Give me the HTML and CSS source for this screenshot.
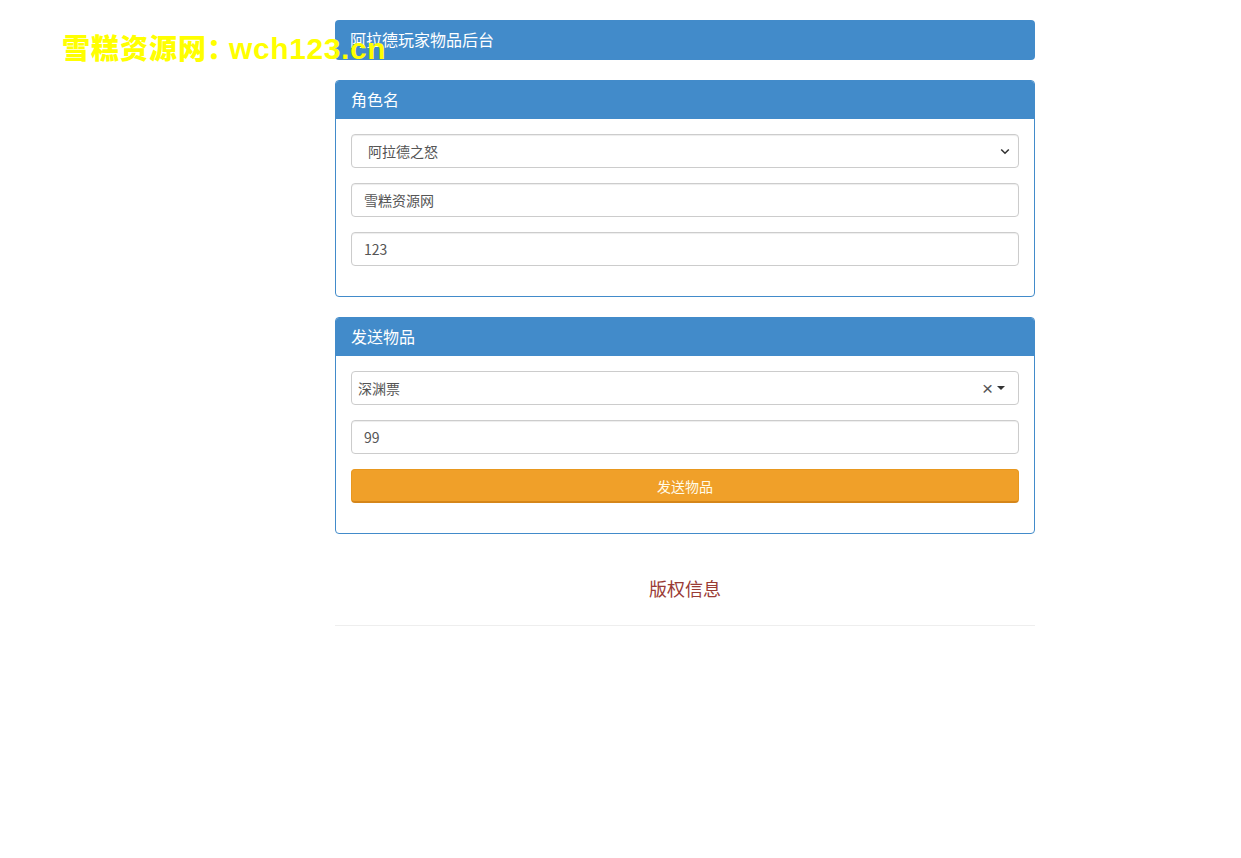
FILE: index.html
```html
<!DOCTYPE html>
<html lang="zh-CN">
<head>
<meta charset="utf-8">
<title>阿拉德玩家物品后台</title>
<link rel="stylesheet" href="styles.css">
</head>
<body>
<div class="watermark">雪糕资源网<span class="wm-colon">：</span><span class="wm-latin">wch123.cn</span></div>
<div class="container">
  <div class="panel panel-top">
    <div class="panel-heading">阿拉德玩家物品后台</div>
  </div>

  <div class="panel">
    <div class="panel-heading">角色名</div>
    <div class="panel-body">
      <div class="form-control select">
        <span class="select-text">阿拉德之怒</span>
        <svg class="chev" width="10" height="7" viewBox="0 0 10 7"><path d="M1.2 1.5 L5 5.2 L8.8 1.5" fill="none" stroke="#333" stroke-width="1.6"/></svg>
      </div>
      <div class="form-control">雪糕资源网</div>
      <div class="form-control">123</div>
    </div>
  </div>

  <div class="panel">
    <div class="panel-heading">发送物品</div>
    <div class="panel-body">
      <div class="form-control select2">
        <span>深渊票</span>
        <span class="s2-actions"><span class="s2-clear">×</span><span class="s2-caret"></span></span>
      </div>
      <div class="form-control">99</div>
      <div class="btn">发送物品</div>
    </div>
  </div>

  <div class="footer">版权信息</div>
  <div class="rule"></div>
</div>
</body>
</html>
```

FILE: styles.css
```css
* { box-sizing: border-box; }
body {
  margin: 0;
  background: #fff;
  font-family: "Noto Sans CJK SC", "Liberation Sans", sans-serif;
  font-size: 14px;
  color: #555;
}
.watermark {
  position: absolute;
  left: 62px;
  top: 29px;
  font-size: 28px;
  font-weight: 900;
  color: #ffff00;
  line-height: 36px;
  letter-spacing: 1px;
  z-index: 5;
  white-space: nowrap;
}
.wm-colon {
  letter-spacing: -6px;
}
.wm-latin {
  font-family: "Liberation Sans", sans-serif;
  font-weight: 700;
  font-size: 30px;
  letter-spacing: 0.6px;
}
.container {
  width: 700px;
  margin: 20px 0 0 335px;
}
.panel {
  border: 1px solid #428bca;
  border-radius: 4px;
  margin-bottom: 20px;
  background: #fff;
}
.panel-top { border: none; }
.panel-heading {
  background: #428bca;
  color: #fff;
  font-size: 16px;
  height: 38px;
  line-height: 37px;
  padding: 0 15px;
  border-radius: 3px 3px 0 0;
}
.panel-top .panel-heading {
  height: 40px;
  line-height: 39px;
  border-radius: 4px;
}
.panel-body {
  padding: 15px;
}
.form-control {
  height: 34px;
  border: 1px solid #ccc;
  border-radius: 4px;
  padding: 0 12px;
  line-height: 32px;
  font-size: 14px;
  color: #555;
  margin-bottom: 15px;
  box-shadow: inset 0 1px 1px rgba(0,0,0,0.075);
  background: #fff;
}
.select {
  display: flex;
  justify-content: space-between;
  align-items: center;
  padding: 0 8px 0 16px;
}
.chev { display: block; }
.select2 {
  display: flex;
  justify-content: space-between;
  align-items: center;
  padding: 0 13px 0 6px;
  box-shadow: none;
}
.s2-actions {
  display: flex;
  align-items: center;
  gap: 4px;
}
.s2-clear {
  font-family: "Liberation Sans", sans-serif;
  font-size: 19px;
  color: #555;
  line-height: 1;
}
.s2-caret {
  width: 0;
  height: 0;
  border-left: 4px solid transparent;
  border-right: 4px solid transparent;
  border-top: 4px solid #333;
}
.btn {
  height: 34px;
  line-height: 32px;
  text-align: center;
  background: #f0a029;
  border: 1px solid #e8981f;
  border-bottom: 2px solid #d5861a;
  border-radius: 4px;
  color: #fffbe8;
  font-size: 14px;
  margin-bottom: 15px;
}
.footer {
  text-align: center;
  color: #9a3b35;
  font-size: 18px;
  margin-top: 40px;
  line-height: 28px;
}
.rule {
  border-top: 1px solid #eee;
  margin-top: 23px;
}
```
